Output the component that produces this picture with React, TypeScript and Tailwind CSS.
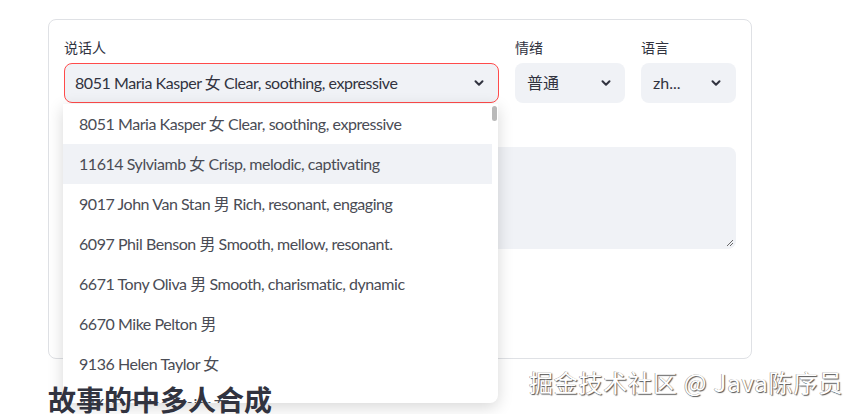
import React from "react";

const FONT = '"Lato", "Noto Sans CJK SC", sans-serif';

const speakers = [
  "8051 Maria Kasper 女 Clear, soothing, expressive",
  "11614 Sylviamb 女 Crisp, melodic, captivating",
  "9017 John Van Stan 男 Rich, resonant, engaging",
  "6097 Phil Benson 男 Smooth, mellow, resonant.",
  "6671 Tony Oliva 男 Smooth, charismatic, dynamic",
  "6670 Mike Pelton 男",
  "9136 Helen Taylor 女",
  "11697 Celine Maier 女",
];

function Chevron() {
  return (
    <svg width="12" height="12" viewBox="0 0 12 12" className="shrink-0">
      <path d="M2.5 4.2 L6 7.7 L9.5 4.2" fill="none" stroke="#31333f" strokeWidth="2" strokeLinecap="round" strokeLinejoin="round" />
    </svg>
  );
}

export default function App() {
  return (
    <div className="relative w-[859px] h-[414px] overflow-hidden bg-white" style={{ fontFamily: FONT }}>
      <div className="pl-[48px] pt-[19px]">
        <div className="w-[704px] h-[340px] border border-[#dfe1e5] rounded-[8px] px-[15px] pt-[16px]">
          <div className="flex gap-[16px]">
            {/* speaker select */}
            <div className="relative w-[435px]">
              <div className="h-[24px] text-[14px] leading-[24px] text-[#31333f] mb-[3px]">说话人</div>
              <div className="h-[40px] rounded-[8px] border border-[#ff4b4b] bg-[#f0f2f6] flex items-center justify-between pl-[10px] pr-[13px] text-[16px] tracking-[-0.45px] text-[#31333f]">
                <span>{speakers[0]}</span>
                <Chevron />
              </div>
              {/* open option list */}
              <div className="absolute left-[-1px] top-[68px] w-[435px] h-[299px] z-10 bg-white rounded-b-[8px] overflow-hidden shadow-[0_4px_16px_rgba(0,0,0,0.16)]">
                <div className="pr-[6px]">
                  {speakers.map((s, i) => (
                    <div
                      key={s}
                      className={`h-[40px] flex items-center pl-[16px] text-[16px] tracking-[-0.45px] text-[#4a4c55] ${i === 1 ? "bg-[#f0f2f6]" : ""}`}
                    >
                      {s}
                    </div>
                  ))}
                </div>
                <div className="absolute right-[1px] top-[2px] w-[5px] h-[15px] rounded-full bg-[#b9b9b9]" />
              </div>
            </div>
            {/* emotion select */}
            <div className="w-[110px]">
              <div className="h-[24px] text-[14px] leading-[24px] text-[#31333f] mb-[3px]">情绪</div>
              <div className="h-[40px] rounded-[8px] bg-[#f0f2f6] flex items-center justify-between pl-[12px] pr-[13px] text-[16px] text-[#31333f]">
                <span>普通</span>
                <Chevron />
              </div>
            </div>
            {/* language select */}
            <div className="w-[95px]">
              <div className="h-[24px] text-[14px] leading-[24px] text-[#31333f] mb-[3px]">语言</div>
              <div className="h-[40px] rounded-[8px] bg-[#f0f2f6] flex items-center justify-between pl-[12px] pr-[14px] text-[16px] text-[#31333f]">
                <span>zh...</span>
                <Chevron />
              </div>
            </div>
          </div>
          <div className="mt-[20px]">
            <div className="h-[24px] text-[14px] leading-[24px] text-[#31333f]">文本</div>
            <div className="relative h-[102px] rounded-[8px] bg-[#f0f2f6]">
              <svg width="8" height="8" viewBox="0 0 8 8" className="absolute right-[2px] bottom-[2px]">
                <path d="M1 7 L7 1 M4 7 L7 4" stroke="#6b6b6b" strokeWidth="1" />
              </svg>
            </div>
          </div>
        </div>
        <h2 className="relative z-20 mt-[22px] text-[28px] leading-[36px] font-bold text-[#31333f]" style={{ fontFamily: '"Noto Sans CJK SC", sans-serif' }}>
          故事的中多人合成
        </h2>
      </div>
      <div
        className="absolute right-[16px] top-[366px] z-30 text-[24px] leading-[32px] text-white tracking-[0.8px]"
        style={{ fontFamily: '"Noto Sans CJK SC", "Liberation Sans", sans-serif', textShadow: "1px 1px 1px #555, -0.5px -0.5px 0 #888" }}
      >
        掘金技术社区 @ Java陈序员
      </div>
    </div>
  );
}
